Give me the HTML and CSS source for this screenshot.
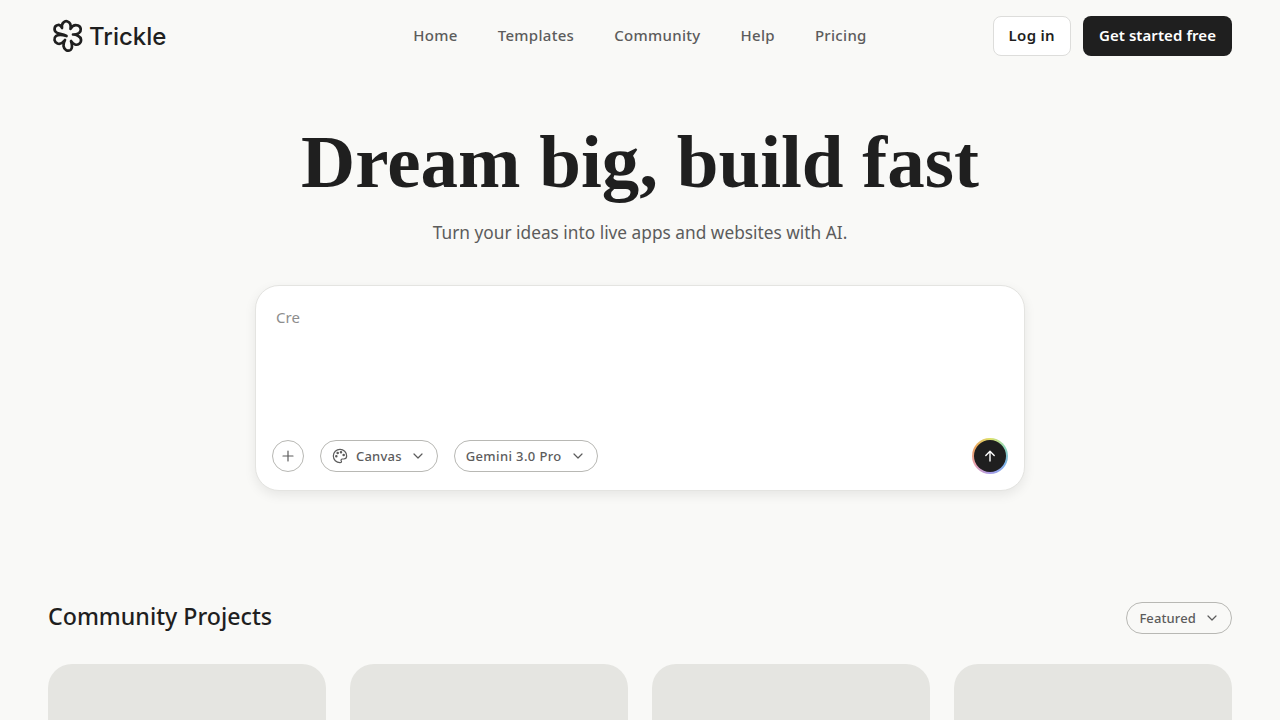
FILE: index.html
```html
<!DOCTYPE html>
<html lang="en">
<head>
  <meta charset="UTF-8" />
  <meta name="viewport" content="width=device-width, initial-scale=1" />
  <title>Trickle</title>
  <link rel="stylesheet" href="styles.css">
</head>
<body>
  <header class="topbar">
    <a class="logo" href="#">
      <svg class="logo-icon" viewBox="0 0 40 40" fill="none" stroke="currentColor" stroke-width="2.7" stroke-linejoin="round" stroke-linecap="round">
        <path d="M14 12C13 7 17 4.500 19.500 5.500C22.500 6.500 23 10 22.500 13C24 10 27 8.500 30 9.500C33.500 11 33.500 15 31 17C29.500 18 27 18.500 25 18.500C28 18.500 32.500 20 33 23.500C33.500 27 30 29.500 27 28.500C25.500 28 24 26.500 23 25C24 28 25 32 22.500 34C19.500 36 16 33.500 15.500 30C15.300 28.500 16 26 17 24C15 26.500 12 28.500 9.500 27.500C6 26 5.500 22 8 20C10 18.500 14 18.500 18.500 20C14.500 17.500 10.500 18 8.500 16.500C5.500 14.500 6 9.500 10 9C11.500 8.800 13 10 14 12Z" />
      </svg>
      <span>Trickle</span>
    </a>
    <nav class="nav">
      <a href="#">Home</a>
      <a href="#">Templates</a>
      <a href="#">Community</a>
      <a href="#">Help</a>
      <a href="#">Pricing</a>
    </nav>
    <div class="actions">
      <a class="btn btn-login" href="#">Log in</a>
      <a class="btn btn-start" href="#">Get started free</a>
    </div>
  </header>

  <main>
    <section class="hero">
      <h1>Dream big, build fast</h1>
      <p class="subtitle">Turn your ideas into live apps and websites with AI.</p>

      <div class="prompt">
        <p class="prompt-text">Cre</p>
        <div class="prompt-tools">
          <button class="round-btn" type="button">
            <svg viewBox="0 0 16 16" width="16" height="16" fill="none" stroke="currentColor" stroke-width="1.2" stroke-linecap="round"><path d="M8 3v10M3 8h10" /></svg>
          </button>
          <button class="pill pill-canvas" type="button">
            <svg class="palette" viewBox="0 0 24 24" width="16" height="16" fill="none" stroke="currentColor" stroke-width="1.8" stroke-linecap="round" stroke-linejoin="round">
              <path d="M12 22a10 10 0 1 1 10-10c0 3-2.200 4.500-4.500 4.500H15.500a2 2 0 0 0-1.500 3.300c.6.800.2 2.200-2 2.200Z" />
              <circle cx="13.500" cy="6.500" r="1" fill="currentColor" />
              <circle cx="17.500" cy="10.500" r="1" fill="currentColor" />
              <circle cx="8.500" cy="7.500" r="1" fill="currentColor" />
              <circle cx="6.500" cy="12.500" r="1" fill="currentColor" />
            </svg>
            <span>Canvas</span>
            <svg class="chev" viewBox="0 0 16 16" width="16" height="16" fill="none" stroke="currentColor" stroke-width="1.2" stroke-linecap="round" stroke-linejoin="round"><path d="M4 6l4 4 4-4" /></svg>
          </button>
          <button class="pill pill-model" type="button">
            <span>Gemini 3.0 Pro</span>
            <svg class="chev" viewBox="0 0 16 16" width="16" height="16" fill="none" stroke="currentColor" stroke-width="1.2" stroke-linecap="round" stroke-linejoin="round"><path d="M4 6l4 4 4-4" /></svg>
          </button>
          <button class="send" type="button">
            <svg viewBox="0 0 16 16" width="16" height="16" fill="none" stroke="currentColor" stroke-width="1.4" stroke-linecap="round" stroke-linejoin="round"><path d="M8 13V3.500M3.800 7.500L8 3.300l4.200 4.200" /></svg>
          </button>
        </div>
      </div>
    </section>

    <section class="community">
      <div class="community-head">
        <h2>Community Projects</h2>
        <button class="pill pill-featured" type="button">
          <span>Featured</span>
          <svg class="chev" viewBox="0 0 16 16" width="16" height="16" fill="none" stroke="currentColor" stroke-width="1.2" stroke-linecap="round" stroke-linejoin="round"><path d="M4 6l4 4 4-4" /></svg>
        </button>
      </div>
      <div class="project-grid">
        <div class="project-card"></div>
        <div class="project-card"></div>
        <div class="project-card"></div>
        <div class="project-card"></div>
      </div>
    </section>
  </main>
</body>
</html>
```

FILE: styles.css
```css
html {
  overflow: hidden;
}

body {
  margin: 0;
  font-family: "Noto Sans", sans-serif;
  background: #f9f9f7;
  color: #1f1f1f;
}

a {
  text-decoration: none;
  color: inherit;
}

button {
  font-family: inherit;
  cursor: pointer;
}

/* Header */
.topbar {
  height: 72px;
  padding: 0 48px;
  display: grid;
  grid-template-columns: 1fr auto 1fr;
  align-items: center;
}

.logo {
  display: flex;
  align-items: center;
  gap: 1px;
  font-family: "Inter", sans-serif;
  font-size: 24px;
  font-weight: 500;
  color: #1f1f1f;
}

.logo-icon {
  width: 40px;
  height: 40px;
}

.nav {
  display: flex;
  gap: 40px;
  padding-bottom: 2px;
  font-size: 15px;
  font-weight: 500;
  letter-spacing: 0.3px;
  color: #5c5c5c;
}

.actions {
  display: flex;
  justify-content: flex-end;
  gap: 12px;
}

.btn {
  height: 40px;
  box-sizing: border-box;
  padding: 0 16px 2px;
  display: flex;
  align-items: center;
  border-radius: 8px;
  font-size: 15px;
  font-weight: 600;
}

.btn-login {
  background: #fff;
  border: 1px solid #dddddb;
  padding: 0 15px 2px;
  letter-spacing: 0.3px;
}

.btn-start {
  background: #1f1f1f;
  color: #fff;
  letter-spacing: 0.07px;
}

/* Hero */
.hero {
  display: flex;
  flex-direction: column;
  align-items: center;
}

h1 {
  margin: 42px 0 0;
  font-family: "Liberation Serif", serif;
  font-size: 75px;
  line-height: 96px;
  font-weight: 700;
  color: #1f1f1f;
}

.subtitle {
  margin: 9px 0 0;
  font-size: 17.3px;
  line-height: 28px;
  font-weight: 400;
  color: #5c5c5c;
}

.prompt {
  margin-top: 38px;
  width: 770px;
  height: 206px;
  box-sizing: border-box;
  padding: 20px 16px 16px;
  background: #fff;
  border: 1px solid #e4e4e1;
  border-radius: 24px;
  box-shadow: 0 4px 12px rgba(0, 0, 0, 0.08);
  display: flex;
  flex-direction: column;
  justify-content: space-between;
}

.prompt-text {
  margin: 0;
  padding-left: 4px;
  font-size: 15px;
  line-height: 22px;
  color: #8d8d8d;
}

.prompt-tools {
  display: flex;
  align-items: center;
  gap: 16px;
  height: 36px;
}

.round-btn {
  width: 32px;
  height: 32px;
  padding: 0;
  display: flex;
  align-items: center;
  justify-content: center;
  background: #fff;
  border: 1px solid #b8b8b4;
  border-radius: 50%;
  color: #5c5c5c;
}

.pill {
  height: 32px;
  padding: 0 11px;
  display: flex;
  align-items: center;
  gap: 8px;
  background: transparent;
  border: 1px solid #b8b8b4;
  border-radius: 16px;
  font-size: 13px;
  font-weight: 500;
  letter-spacing: 0.35px;
  color: #5c5c5c;
}

.pill-canvas {
  letter-spacing: 0.2px;
}

.pill-model {
  letter-spacing: 0.38px;
  padding-right: 11.5px;
}

.pill-featured {
  letter-spacing: 0.12px;
  padding-left: 12px;
}

.send {
  margin-left: auto;
  width: 36px;
  height: 36px;
  padding: 0;
  display: flex;
  align-items: center;
  justify-content: center;
  color: #fff;
  border: 2px solid transparent;
  border-radius: 50%;
  background:
    linear-gradient(#1f1f1f, #1f1f1f) padding-box,
    conic-gradient(#dfe26a, #8fd8b8, #7ab0ea, #a89be8, #e8a0b0, #e9a25c, #dfe26a) border-box;
}

/* Community */
.community {
  padding: 0 48px;
  margin-top: 111px;
}

.community-head {
  height: 32px;
  display: flex;
  align-items: flex-start;
  justify-content: space-between;
}

h2 {
  margin: 0;
  font-size: 23.2px;
  line-height: 28px;
  font-weight: 500;
  color: #1f1f1f;
}

.project-grid {
  margin-top: 30px;
  display: grid;
  grid-template-columns: repeat(4, 1fr);
  gap: 24px;
}

.project-card {
  height: 200px;
  background: #e5e5e1;
  border-radius: 24px;
}
```
